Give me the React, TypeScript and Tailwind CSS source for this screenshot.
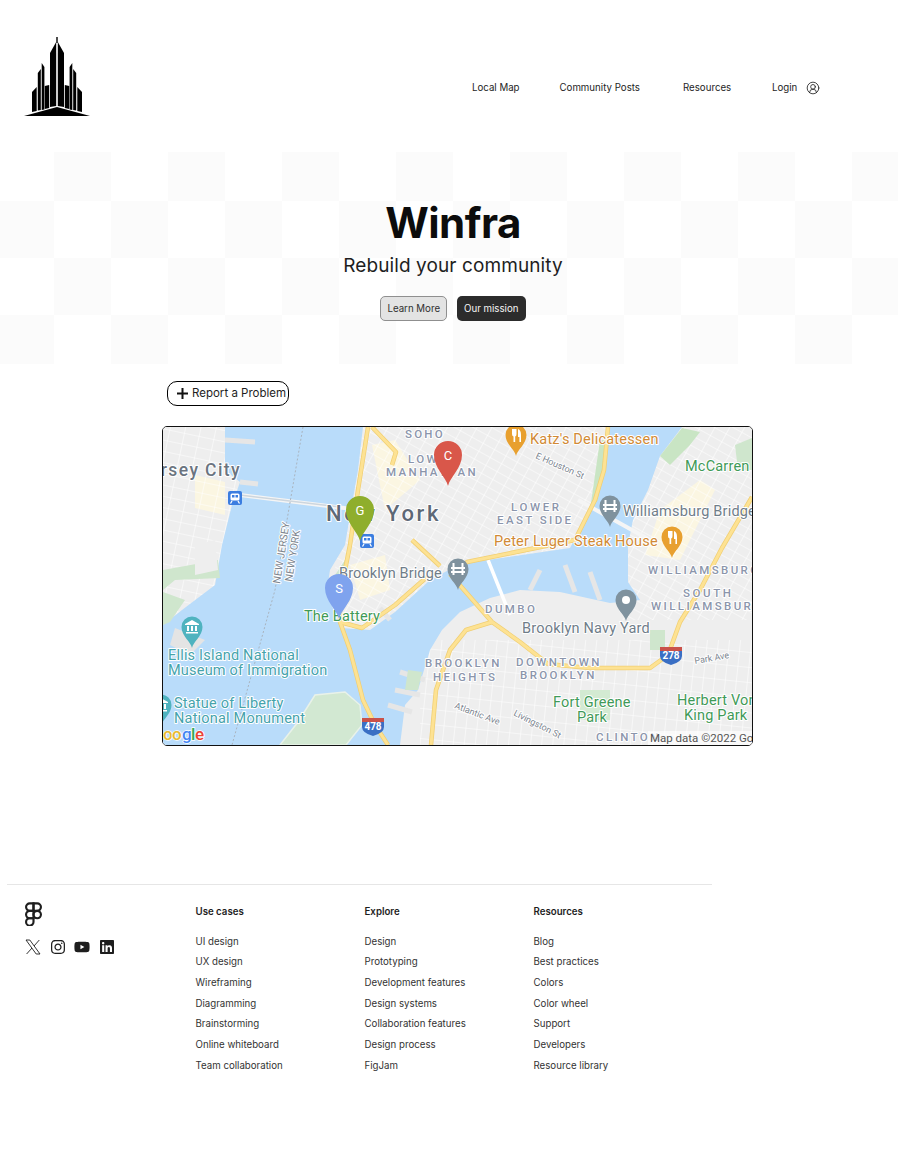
import { CircleUserRound } from "lucide-react";
import { FaInstagram, FaLinkedin, FaYoutube } from "react-icons/fa";

const footerCols = [
  {
    title: "Use cases",
    links: ["UI design", "UX design", "Wireframing", "Diagramming", "Brainstorming", "Online whiteboard", "Team collaboration"],
  },
  {
    title: "Explore",
    links: ["Design", "Prototyping", "Development features", "Design systems", "Collaboration features", "Design process", "FigJam"],
  },
  {
    title: "Resources",
    links: ["Blog", "Best practices", "Colors", "Color wheel", "Support", "Developers", "Resource library"],
  },
];

const GRAY = "#6f7d89";
const AREA = "#8b95ab";
const GREEN = "#3f9a58";
const TEAL = "#45a3ac";
const FOOD = "#d18a35";

// x, baseline, text, size, colour, weight, spacing
const labels: [number, number, string, number, string, number, number][] = [
  [405, 438, "SOHO", 11.5, AREA, 500, 2.2],
  [408, 463, "LOWER", 11.5, AREA, 500, 2.4],
  [386, 476, "MANHATTAN", 11.5, AREA, 500, 2.4],
  [326, 521, "New York", 22, "#5d6876", 500, 2.7],
  [530, 444, "Katz's Delicatessen", 14.5, FOOD, 400, 0.2],
  [685, 471, "McCarren", 14.5, GREEN, 400, 0.2],
  [623, 516, "Williamsburg Bridge", 14.5, GRAY, 400, 0.2],
  [511, 511, "LOWER", 11.5, AREA, 500, 2.6],
  [497, 524, "EAST SIDE", 11.5, AREA, 500, 2.4],
  [494, 546, "Peter Luger Steak House", 14.5, FOOD, 400, 0.2],
  [648, 574, "WILLIAMSBURG", 11.5, AREA, 500, 2.4],
  [683, 597, "SOUTH", 11.5, AREA, 500, 2.6],
  [651, 610, "WILLIAMSBURG", 11.5, AREA, 500, 2.4],
  [339, 578, "Brooklyn Bridge", 14.5, GRAY, 400, 0.1],
  [304, 621, "The Battery", 14.5, GREEN, 400, 0.2],
  [168, 660, "Ellis Island National", 14.5, TEAL, 400, 0.2],
  [168, 675, "Museum of Immigration", 14.5, TEAL, 400, 0.2],
  [174, 708, "Statue of Liberty", 14.5, TEAL, 400, 0.2],
  [174, 723, "National Monument", 14.5, TEAL, 400, 0.2],
  [485, 613, "DUMBO", 11.5, AREA, 500, 2.4],
  [522, 633, "Brooklyn Navy Yard", 14.5, GRAY, 400, 0.2],
  [425, 667, "BROOKLYN", 11.5, AREA, 500, 2.4],
  [433, 681, "HEIGHTS", 11.5, AREA, 500, 2.4],
  [516, 666, "DOWNTOWN", 11.5, AREA, 500, 2.4],
  [520, 679, "BROOKLYN", 11.5, AREA, 500, 2.4],
  [553, 707, "Fort Greene", 14.5, GREEN, 400, 0.2],
  [577, 722, "Park", 14.5, GREEN, 400, 0.2],
  [677, 705, "Herbert Von", 14.5, GREEN, 400, 0.2],
  [684, 720, "King Park", 14.5, GREEN, 400, 0.2],
  [596, 741, "CLINTON", 11.5, AREA, 500, 2.4],
];

// small street names and the border text, which run at an angle
const tilted: [number, number, number, string, number][] = [
  [535, 458, 24, "E Houston St", 9],
  [454, 708, 21, "Atlantic Ave", 9],
  [513, 715, 27, "Livingston St", 9],
  [695, 664, -10, "Park Ave", 9],
  [280, 584, -81, "NEW JERSEY", 10.5],
  [292, 582, -81, "NEW YORK", 10.5],
];

const highways = [
  "M368 427 L358 490 L350 545 L340 595 L340 622 L350 650 L363 700 L375 725 L388 745",
  "M340 622 L362 628 L395 605 L427 577",
  "M608 427 L604 470 L595 500 L575 540 L467 562 L450 574",
  "M450 574 L492 622 L520 642 L548 664 L590 668 L650 668 L668 655 L680 622 L700 590 L722 548 L752 497",
  "M492 622 L466 630 L450 650 L436 690 L431 745",
  "M372 427 L396 452 L392 465",
  "M412 540 L440 566",
];

const piers = [
  "M225 440 L255 442",
  "M240 482 L258 484",
  "M530 590 L540 570",
  "M575 592 L565 565",
  "M600 600 L590 572",
  "M425 680 L400 672",
  "M420 695 L395 690",
  "M412 712 L388 705",
  "M380 608 L390 620",
];

function Logo() {
  const parts = [
    "32,92 36.7,87 36.7,111 32,112",
    "37.8,73 40.8,69 40.8,110 37.8,110.5",
    "41.7,63 44.4,67 44.4,109.5 41.7,110",
    "44.8,86 49.2,85 49.2,108 44.8,109",
    "50,53 56.2,42 56.2,106 50,107",
  ];
  return (
    <svg viewBox="24 36 66 81" className="w-[66px] h-[81px]">
      <rect x="56.2" y="37" width="1.6" height="6" fill="#222" />
      {parts.map((p) => (
        <polygon key={p} points={p} fill="#000" />
      ))}
      <g transform="matrix(-1 0 0 1 114 0)">
        {parts.map((p) => (
          <polygon key={p} points={p} fill="#000" />
        ))}
      </g>
      <polygon points="24,116 57,107 90,116" fill="#000" />
    </svg>
  );
}

function FigmaIcon() {
  return (
    <svg viewBox="4 1 16 22" fill="none" stroke="#1e1e1e" strokeWidth="2" className="w-[17px] h-[24px]">
      <path d="M5 5.5A3.5 3.5 0 0 1 8.5 2H12v7H8.5A3.5 3.5 0 0 1 5 5.5z" />
      <path d="M12 2h3.5a3.5 3.5 0 1 1 0 7H12V2z" />
      <path d="M12 12.5a3.5 3.5 0 1 1 7 0 3.5 3.5 0 1 1-7 0z" />
      <path d="M5 19.5A3.5 3.5 0 0 1 8.5 16H12v3.5a3.5 3.5 0 1 1-7 0z" />
      <path d="M5 12.5A3.5 3.5 0 0 1 8.5 9H12v7H8.5A3.5 3.5 0 0 1 5 12.5z" />
    </svg>
  );
}

function XIcon() {
  return (
    <svg viewBox="0 0 16 16" fill="none" stroke="#1e1e1e" strokeWidth="0.9" className="w-[16px] h-[16px]">
      <path d="M1 1 H4.8 L15 15 H11.2 Z" />
      <path d="M14.3 1 L9 7 M1.6 15 L7 9" />
    </svg>
  );
}

function Pin({ x, y, color, letter }: { x: number; y: number; color: string; letter: string }) {
  return (
    <g transform={`translate(${x} ${y})`}>
      <path d="M0 31 C-2 22 -14 13 -14 0 A14 14 0 0 1 14 0 C14 13 2 22 0 31 Z" fill={color} />
      <text y="5" textAnchor="middle" fontSize="13" fill="#fff" fontFamily="Roboto, sans-serif">
        {letter}
      </text>
    </g>
  );
}

function Poi({ x, y, color, kind }: { x: number; y: number; color: string; kind: "food" | "bridge" | "dot" | "museum" }) {
  return (
    <g transform={`translate(${x} ${y})`}>
      <path d="M0 21 C-1 15 -10.5 9 -10.5 0 A10.5 10.5 0 0 1 10.5 0 C10.5 9 1 15 0 21 Z" fill={color} />
      {kind === "food" && (
        <path d="M-4 -6 V-1 Q-4 1 -2.5 1.5 V7 H-0.8 V1.5 Q0.5 1 0.5 -1 V-6 Z M2 -6 Q5 -5 5 0 V7 H3.4 V2 H2 Z" fill="#fff" />
      )}
      {kind === "bridge" && (
        <path d="M-7 -1 H7 M-7 3 H7 M-4.5 -6 V6 M4.5 -6 V6" stroke="#fff" strokeWidth="2" fill="none" />
      )}
      {kind === "dot" && <circle r="4" fill="#fff" />}
      {kind === "museum" && (
        <path d="M0 -7 L7 -3 V-2 H-7 V-3 Z M-6 5 H6 V6.5 H-6 Z M-5 -1 H-3 V4 H-5 Z M-1 -1 H1 V4 H-1 Z M3 -1 H5 V4 H3 Z" fill="#fff" />
      )}
    </g>
  );
}

function Rail({ x, y }: { x: number; y: number }) {
  return (
    <g transform={`translate(${x} ${y})`}>
      <rect x="-7" y="-7" width="14" height="14" rx="2" fill="#3b7de0" />
      <rect x="-4.5" y="-4.5" width="9" height="7" rx="1.5" fill="#fff" />
      <rect x="-3" y="-3" width="2.5" height="2.5" fill="#3b7de0" />
      <rect x="0.5" y="-3" width="2.5" height="2.5" fill="#3b7de0" />
      <path d="M-3 3 L-4.5 5.5 M3 3 L4.5 5.5" stroke="#fff" strokeWidth="1.3" />
    </g>
  );
}

function Shield({ x, y, num }: { x: number; y: number; num: string }) {
  return (
    <g transform={`translate(${x} ${y})`}>
      <path d="M-11 -8 H11 V-4 H-11 Z" fill="#c9524a" />
      <path d="M-11 -4 H11 V1 Q11 7 0 10 Q-11 7 -11 1 Z" fill="#3a6fc4" />
      <text y="4" textAnchor="middle" fontSize="10" fontWeight="700" fill="#fff" fontFamily="Roboto, sans-serif">
        {num}
      </text>
    </g>
  );
}

function CityMap() {
  const water =
    "M225 427 L363 427 L358 470 L351 510 L345 545 L330 570 L327 590 L335 615 L342 628 L370 630 L395 612 L430 580 L460 564 L570 548 L590 510 L600 475 L607 427 L682 427 L660 456 L648 490 L633 520 L628 545 L628 582 L640 600 L610 603 L560 592 L520 590 L490 598 L460 612 L442 630 L430 650 L418 690 L405 705 L400 745 L163 745 L163 625 L182 610 L215 585 L222 545 L232 505 L240 482 L225 470 Z";

  return (
    <svg viewBox="163 427 589 318" className="block w-full h-full">
      <defs>
        <pattern id="streetsA" width="13" height="9" patternUnits="userSpaceOnUse" patternTransform="rotate(29)">
          <path d="M0 0 H13 M0 0 V9" stroke="#fff" strokeWidth="1.1" />
        </pattern>
        <pattern id="streetsB" width="11" height="15" patternUnits="userSpaceOnUse" patternTransform="rotate(6)">
          <path d="M0 0 H11 M0 0 V15" stroke="#fff" strokeWidth="1.1" />
        </pattern>
        <pattern id="streetsC" width="15" height="11" patternUnits="userSpaceOnUse" patternTransform="rotate(12)">
          <path d="M0 0 H15 M0 0 V11" stroke="#fff" strokeWidth="1.1" />
        </pattern>
      </defs>

      <rect x="163" y="427" width="589" height="318" fill="#eeeeee" />
      <polygon points="372,445 395,440 420,480 385,510" fill="#fbf6e2" />
      <polygon points="660,510 700,480 715,490 680,560 645,555" fill="#fbf6e2" />
      <polygon points="195,475 225,482 225,515 195,508" fill="#fbf6e2" />
      <polygon points="350,565 385,555 390,590 360,600" fill="#fbf6e2" />
      <rect x="163" y="427" width="80" height="200" fill="url(#streetsC)" />
      <polygon points="345,427 610,427 590,560 330,640" fill="url(#streetsA)" />
      <polygon points="610,427 752,427 752,620 620,620" fill="url(#streetsA)" />
      <rect x="420" y="640" width="332" height="105" fill="url(#streetsB)" />

      <path d={water} fill="#b9dcfa" />
      {piers.map((d) => (
        <path key={d} d={d} stroke="#e6e6e6" strokeWidth="5" fill="none" />
      ))}
      <polygon points="163,570 218,560 220,578 175,580 163,590" fill="#cfe6cd" />
      <polygon points="163,592 185,600 170,622 163,625" fill="#cfe6cd" />
      <polygon points="175,628 205,640 190,655 170,645" fill="#e4e4e4" />
      <polygon points="280,745 298,722 315,695 345,692 360,705 362,725 346,745" fill="#d2e8d2" stroke="#e9f2e9" strokeWidth="1.5" />
      <polygon points="682,428 700,432 690,445 670,465 660,456" fill="#c9e5c4" />
      <polygon points="735,445 752,438 752,470 738,470" fill="#cfe6cd" />
      <polygon points="600,440 607,440 598,500 590,510" fill="#c9e5c4" />
      <polygon points="335,575 345,560 350,600 338,612" fill="#cfe6cd" />
      <polygon points="650,630 665,630 665,650 650,650" fill="#cfe6cd" />
      <polygon points="580,690 610,690 610,720 580,720" fill="#d3ead2" />
      <polygon points="195,545 215,540 218,570 195,575" fill="#eeeeee" />
      <polygon points="408,670 422,672 418,690 405,690" fill="#cfe6cd" />

      <path d="M240 495 L360 510 M578 500 L650 540" stroke="#f5f5f5" strokeWidth="4" fill="none" />
      <path d="M488 560 L510 615" stroke="#fff" strokeWidth="3.5" fill="none" />
      <path d="M240 495 L340 507" stroke="#cdd6de" strokeWidth="1.5" fill="none" />
      <path d="M303 427 L275 590 L232 745" stroke="#a9b4bf" strokeWidth="1" strokeDasharray="2 2" fill="none" />

      {highways.map((d) => (
        <path key={d} d={d} stroke="#f1cf73" strokeWidth="4.5" fill="none" strokeLinejoin="round" />
      ))}
      {highways.map((d) => (
        <path key={d} d={d} stroke="#fde293" strokeWidth="3" fill="none" strokeLinejoin="round" />
      ))}

      <g fontFamily="Roboto, sans-serif" stroke="#fff" strokeWidth="2" paintOrder="stroke" strokeLinejoin="round">
        {labels.map(([x, y, text, size, color, weight, spacing]) => (
          <text key={`${text}${x}`} x={x} y={y} fontSize={size} fill={color} fontWeight={weight} letterSpacing={spacing}>
            {text}
          </text>
        ))}
        <text x="241" y="476" textAnchor="end" fontSize="17.5" fill="#6b7480" fontWeight="500" letterSpacing="1.4">
          Jersey City
        </text>
        {tilted.map(([x, y, angle, text, size]) => (
          <text
            key={text}
            x={x}
            y={y}
            fontSize={size}
            fill="#7d8690"
            transform={`rotate(${angle} ${x} ${y})`}
          >
            {text}
          </text>
        ))}
      </g>

      <Rail x={235} y={498} />
      <Rail x={367} y={541} />
      <Poi x={610} y={506} color="#7f929e" kind="bridge" />
      <Poi x={458} y={569} color="#7f929e" kind="bridge" />
      <Poi x={626} y={600} color="#7f929e" kind="dot" />
      <Poi x={192} y={627} color="#4fb3bf" kind="museum" />
      <Poi x={161} y={705} color="#4fb3bf" kind="museum" />
      <Poi x={516} y={435} color="#e8a02f" kind="food" />
      <Poi x={672} y={537} color="#e8a02f" kind="food" />
      <Shield x={671} y={655} num="278" />
      <Shield x={373} y={726} num="478" />

      <Pin x={448} y={455} color="#d9574a" letter="C" />
      <Pin x={360} y={510} color="#8fae2c" letter="G" />
      <Pin x={339} y={588} color="#7fa3ee" letter="S" />

      <g fontFamily="Roboto, sans-serif" fontSize="17" fontWeight="500" stroke="#fff" strokeWidth="1.5" paintOrder="stroke">
        <text x="151" y="740" fill="#4285f4">G</text>
        <text x="163" y="740" fill="#e8b92f">o</text>
        <text x="172" y="740" fill="#e8b92f">o</text>
        <text x="182" y="740" fill="#4285f4">g</text>
        <text x="191" y="740" fill="#34a853">l</text>
        <text x="195" y="740" fill="#ea4335">e</text>
      </g>

      <rect x="648" y="731" width="104" height="14" fill="#fff" fillOpacity="0.65" />
      <text x="650" y="742" fontSize="11.5" fill="#555" fontFamily="Roboto, sans-serif">
        Map data ©2022 Google
      </text>
    </svg>
  );
}

export default function App() {
  return (
    <div className="min-h-[1160px] bg-white font-['Inter',sans-serif] text-[#1e1e1e]">
      <header className="h-[152px] flex pl-[24px] pt-[36px]">
        <Logo />
        <nav className="flex items-center h-[104px] ml-[382px] text-[9.7px] pt-[1px]">
          <a className="w-[87.5px]">Local Map</a>
          <a className="w-[123.5px]">Community Posts</a>
          <a className="w-[89px]">Resources</a>
          <a className="w-[34px]">Login</a>
          <CircleUserRound size={14} strokeWidth={1.4} className="mb-[2px]" />
        </nav>
      </header>

      <section className="h-[212px] flex flex-col items-center pl-[8px] bg-[conic-gradient(#fbfbfb_25%,#fff_0_50%,#fbfbfb_0_75%,#fff_0)] bg-[size:114px_114px] bg-[position:-3px_-8px]">
        <h1 className="mt-[44px] text-[42px] leading-[53px] font-bold tracking-[-0.5px] text-[#0c0c0c]">Winfra</h1>
        <p className="mt-[5px] text-[19px] leading-[24px] tracking-[0.1px]">Rebuild your community</p>
        <div className="mt-[18px] flex gap-[9.5px] text-[9.7px]">
          <button className="w-[67px] h-[25px] pt-[1px] rounded-[5px] border border-[#8f8f8f] bg-[#e3e3e3] text-[#303030]">Learn More</button>
          <button className="w-[69px] h-[25px] pt-[1px] rounded-[5px] bg-[#2c2c2c] text-[#f5f5f5]">Our mission</button>
        </div>
      </section>

      <div className="pl-[162px] pt-[17px]">
        <button className="ml-[5px] w-[122px] h-[25px] flex items-center gap-[4px] pl-[9px] rounded-[10px] border border-black text-[11.5px] whitespace-nowrap">
          <svg viewBox="0 0 11 11" className="w-[11px] h-[11px]" stroke="#111" strokeWidth="2">
            <path d="M5.5 0 V11 M0 5.5 H11" />
          </svg>
          <span className="pt-[1px]">Report a Problem</span>
        </button>
        <div className="mt-[20px] w-[591px] h-[320px] rounded-[5px] border border-[#111] overflow-hidden">
          <CityMap />
        </div>
      </div>

      <footer className="mt-[138px] ml-[7px] w-[705px] border-t border-[#e6e6e6] flex">
        <div className="w-[188.5px] pl-[18px] pt-[17px]">
          <FigmaIcon />
          <div className="mt-[13px] flex items-center gap-[8.5px]">
            <XIcon />
            <FaInstagram size={16} />
            <FaYoutube size={16} />
            <FaLinkedin size={16} />
          </div>
        </div>
        {footerCols.map((col) => (
          <div key={col.title} className="w-[169px] pt-[21px] text-[9.7px] leading-[12px]">
            <p className="font-semibold mb-[17.5px]">{col.title}</p>
            <ul className="flex flex-col gap-[8.7px] text-[#333]">
              {col.links.map((l) => (
                <li key={l}>{l}</li>
              ))}
            </ul>
          </div>
        ))}
      </footer>
    </div>
  );
}
